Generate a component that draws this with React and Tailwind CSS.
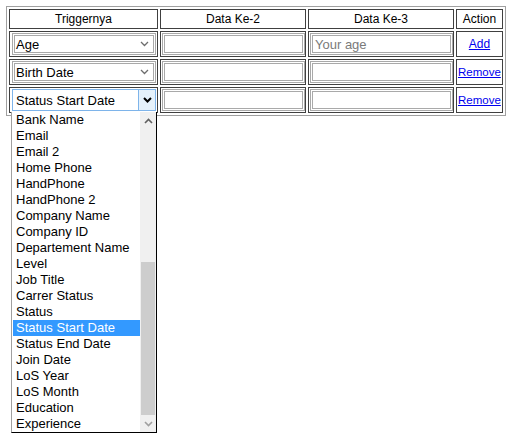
import React from "react";

const items = [
  "Bank Name", "Email", "Email 2", "Home Phone", "HandPhone", "HandPhone 2",
  "Company Name", "Company ID", "Departement Name", "Level", "Job Title",
  "Carrer Status", "Status", "Status Start Date", "Status End Date", "Join Date",
  "LoS Year", "LoS Month", "Education", "Experience",
];

const Chevron = ({ bold }) => (
  <svg width="9" height="6" viewBox="0 0 9 6" className="block">
    <path d="M1 1 L4.5 4.5 L8 1" fill="none" stroke={bold ? "#000" : "#6d6d6d"} strokeWidth={bold ? 2 : 1.3} />
  </svg>
);

const ChevronUp = () => (
  <svg width="9" height="6" viewBox="0 0 9 6" className="block">
    <path d="M1 5 L4.5 1.5 L8 5" fill="none" stroke="#606060" strokeWidth="1.6" />
  </svg>
);
const ChevronDown = () => (
  <svg width="9" height="6" viewBox="0 0 9 6" className="block">
    <path d="M1 1 L4.5 4.5 L8 1" fill="none" stroke="#a0a0a0" strokeWidth="1.6" />
  </svg>
);

function Select({ value }) {
  return (
    <div className="w-[144px] h-[22px] border-[3px] border-double border-[#a9a9a9] bg-white flex items-center justify-between pl-[1px] pr-[4px]">
      <span className="text-[13px] text-black leading-none">{value}</span>
      <Chevron />
    </div>
  );
}

function Input({ placeholder }) {
  return (
    <div className="w-[143px] h-[22px] border-[3px] border-double border-[#a9a9a9] bg-white flex items-center pl-[2px]">
      {placeholder && <span className="text-[13px] text-[#7a7a7a] leading-none">{placeholder}</span>}
    </div>
  );
}

function Cell({ w, children, className = "" }) {
  return (
    <div className={`border border-[#404040] flex items-center ${w} ${className}`}>{children}</div>
  );
}

function Row({ children }) {
  return <div className="flex gap-[2px] h-[26px]">{children}</div>;
}

export default function App() {
  return (
    <div className="relative w-[514px] h-[441px] bg-white" style={{ fontFamily: '"Liberation Sans", Arial, sans-serif' }}>
      <div className="absolute left-[6px] top-[6px] w-[500px] border border-[#a0a0a0] p-[2px] flex flex-col gap-[2px]">
        <div className="flex gap-[2px] h-[20px] text-[12px] text-black">
          <Cell w="w-[149px]" className="justify-center">Triggernya</Cell>
          <Cell w="w-[146px]" className="justify-center">Data Ke-2</Cell>
          <Cell w="w-[146px]" className="justify-center">Data Ke-3</Cell>
          <Cell w="w-[47px]" className="justify-center">Action</Cell>
        </div>
        <Row>
          <Cell w="w-[149px]" className="pl-[2px]"><Select value="Age" /></Cell>
          <Cell w="w-[146px]" className="pl-[1px]"><Input /></Cell>
          <Cell w="w-[146px]" className="pl-[1px]"><Input placeholder="Your age" /></Cell>
          <Cell w="w-[47px]" className="justify-center">
            <a href="#" className="text-[12px] text-[#0000ee] underline">Add</a>
          </Cell>
        </Row>
        <Row>
          <Cell w="w-[149px]" className="pl-[2px]"><Select value="Birth Date" /></Cell>
          <Cell w="w-[146px]" className="pl-[1px]"><Input /></Cell>
          <Cell w="w-[146px]" className="pl-[1px]"><Input /></Cell>
          <Cell w="w-[47px]" className="pl-[1px] pt-[1px]">
            <a href="#" className="text-[11.5px] text-[#0000ee] underline">Remove</a>
          </Cell>
        </Row>
        <Row>
          <Cell w="w-[149px]" className="pl-[2px]">
            <div className="w-[144px] h-[22px] border border-[#7eb4ea] bg-white flex items-stretch">
              <span className="flex-1 flex items-center pl-[3px] text-[13px] text-black leading-none">Status Start Date</span>
              <span className="w-[17px] bg-[#e5f1fb] border-l border-[#7eb4ea] flex items-center justify-center">
                <Chevron bold />
              </span>
            </div>
          </Cell>
          <Cell w="w-[146px]" className="pl-[1px]"><Input /></Cell>
          <Cell w="w-[146px]" className="pl-[1px]"><Input /></Cell>
          <Cell w="w-[47px]" className="pl-[1px] pt-[1px]">
            <a href="#" className="text-[11.5px] text-[#0000ee] underline">Remove</a>
          </Cell>
        </Row>
      </div>

      <div className="absolute left-[11px] top-[112px] w-[146px] h-[321px] bg-white border-l border-[#a0a0a0] border-r border-b border-r-black border-b-black flex">
        <div className="w-[128px] pl-[1px]">
          {items.map((it) => (
            <div
              key={it}
              className={`h-[16px] flex items-center pl-[3px] pb-[1px] text-[13px] leading-none ${it === "Status Start Date" ? "bg-[#3399ff] text-white" : "text-black"}`}
            >
              {it}
            </div>
          ))}
        </div>
        <div className="w-[16px] bg-[#f0f0f0] flex flex-col">
          <div className="h-[17px] flex items-center justify-center"><ChevronUp /></div>
          <div className="flex-1 relative">
            <div className="absolute left-[1px] right-[1px] top-[133px] bottom-0 bg-[#cdcdcd]" />
          </div>
          <div className="h-[17px] flex items-center justify-center"><ChevronDown /></div>
        </div>
      </div>
    </div>
  );
}
